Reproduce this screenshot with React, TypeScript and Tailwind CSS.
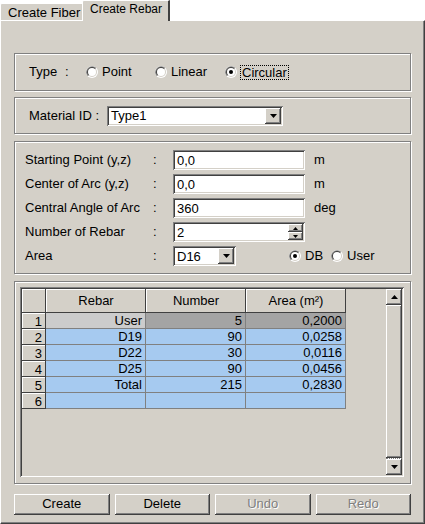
import React from "react";

const raised =
  "bg-[#d4d0c8] shadow-[inset_-1px_-1px_0_#404040,inset_1px_1px_0_#ffffff,inset_-2px_-2px_0_#808080]";
const sunken =
  "bg-white shadow-[inset_1px_1px_0_#808080,inset_-1px_-1px_0_#ffffff,inset_2px_2px_0_#404040,inset_-2px_-2px_0_#d4d0c8]";
const group =
  "border border-[#808080] shadow-[inset_1px_1px_0_#ffffff,1px_1px_0_#ffffff]";

function Radio({ checked }: { checked?: boolean }) {
  return (
    <svg width="12" height="12" viewBox="0 0 12 12" className="shrink-0">
      <circle cx="6" cy="6" r="6" fill="#ffffff" />
      <path d="M1.76 10.24 A6 6 0 0 1 10.24 1.76 Z" fill="#808080" />
      <circle cx="6" cy="6" r="5" fill="#d4d0c8" />
      <path d="M2.46 9.54 A5 5 0 0 1 9.54 2.46 Z" fill="#404040" />
      <circle cx="6" cy="6" r="4" fill="#ffffff" />
      {checked && <circle cx="6" cy="6" r="2" fill="#000000" />}
    </svg>
  );
}

function DownTri() {
  return (
    <svg width="7" height="4" viewBox="0 0 7 4">
      <path d="M0 0 H7 L3.5 4 Z" fill="#000" />
    </svg>
  );
}
function UpTri() {
  return (
    <svg width="7" height="4" viewBox="0 0 7 4">
      <path d="M0 4 H7 L3.5 0 Z" fill="#000" />
    </svg>
  );
}

function DropBtn() {
  return (
    <div className={`w-[16px] h-[16px] flex items-center justify-center ${raised}`}>
      <DownTri />
    </div>
  );
}

function Combo({ w, text }: { w: string; text: string }) {
  return (
    <div className={`${w} h-[20px] flex items-center p-[2px] ${sunken}`}>
      <span className="flex-1 pl-[2px] leading-none">{text}</span>
      <DropBtn />
    </div>
  );
}

function Field({ text, spin }: { text: string; spin?: boolean }) {
  return (
    <div className={`w-[132px] h-[20px] flex items-center p-[2px] ${sunken}`}>
      <span className="flex-1 pl-[2px] leading-none">{text}</span>
      {spin && (
        <div className="flex flex-col w-[15px] h-[16px]">
          <div className={`h-[8px] flex items-center justify-center ${raised}`}>
            <svg width="5" height="3" viewBox="0 0 5 3">
              <path d="M0 3 H5 L2.5 0 Z" fill="#000" />
            </svg>
          </div>
          <div className={`h-[8px] flex items-center justify-center ${raised}`}>
            <svg width="5" height="3" viewBox="0 0 5 3">
              <path d="M0 0 H5 L2.5 3 Z" fill="#000" />
            </svg>
          </div>
        </div>
      )}
    </div>
  );
}

function Row({ label, children }: { label: string; children: React.ReactNode }) {
  return (
    <div className="h-[20px] flex items-center">
      <span className="w-[128px]">{label}</span>
      <span className="w-[20px]">:</span>
      {children}
    </div>
  );
}

const rows = [
  { n: "1", rebar: "User", num: "5", area: "0,2000", first: true },
  { n: "2", rebar: "D19", num: "90", area: "0,0258" },
  { n: "3", rebar: "D22", num: "30", area: "0,0116" },
  { n: "4", rebar: "D25", num: "90", area: "0,0456" },
  { n: "5", rebar: "Total", num: "215", area: "0,2830" },
  { n: "6", rebar: "", num: "", area: "" },
];

const hdr =
  "bg-[#d4d0c8] shadow-[inset_-1px_-1px_0_#404040,inset_1px_1px_0_#ffffff]";

export default function App() {
  return (
    <div className="w-[425px] h-[524px] bg-white text-[13px] text-black font-['Liberation_Sans',Arial,sans-serif] overflow-hidden">
      {/* tabs */}
      <div className="h-[20px] flex items-end relative z-10">
        <div className="w-[82px] h-[17px] bg-[#d4d0c8] border-t border-l border-white rounded-tl-[2px] flex items-center pl-[7px] leading-none whitespace-nowrap">
          Create Fiber
        </div>
        <div className="w-[88px] h-[21px] -mb-[1px] bg-[#d4d0c8] border-t border-l border-white border-r-2 border-r-[#404040] rounded-tl-[2px] flex items-start pt-[2px] pl-[7px] leading-none whitespace-nowrap text-[12px]">
          Create Rebar
        </div>
      </div>
      {/* panel */}
      <div className="h-[504px] bg-[#d4d0c8] border-t border-l border-white border-r border-b border-r-[#404040] border-b-[#404040] shadow-[inset_-1px_-1px_0_#808080] pl-[13px] pr-[13px] flex flex-col">
        {/* Type group */}
        <div className={`mt-[32px] h-[38px] ${group} flex items-center pl-[14px]`}>
          <span className="w-[36px]">Type</span>
          <span className="w-[21px]">:</span>
          <div className="w-[69px] flex items-center gap-[4px]">
            <Radio />
            <span>Point</span>
          </div>
          <div className="w-[70px] flex items-center gap-[4px]">
            <Radio />
            <span>Linear</span>
          </div>
          <div className="flex items-center gap-[3px]">
            <Radio checked />
            <span className="border border-dotted border-black px-[1px] leading-[13px]">Circular</span>
          </div>
        </div>
        {/* Material */}
        <div className={`mt-[6px] h-[37px] ${group} flex items-center pl-[14px]`}>
          <span className="w-[78px]">Material ID :</span>
          <Combo w="w-[176px]" text="Type1" />
        </div>
        {/* parameters */}
        <div className={`mt-[7px] h-[133px] ${group} flex flex-col gap-[4px] pt-[8px] pl-[10px]`}>
          <Row label="Starting Point (y,z)">
            <Field text="0,0" />
            <span className="ml-[9px]">m</span>
          </Row>
          <Row label="Center of Arc (y,z)">
            <Field text="0,0" />
            <span className="ml-[9px]">m</span>
          </Row>
          <Row label="Central Angle of Arc">
            <Field text="360" />
            <span className="ml-[9px]">deg</span>
          </Row>
          <Row label="Number of Rebar">
            <Field text="2" spin />
          </Row>
          <Row label="Area">
            <Combo w="w-[63px]" text="D16" />
            <div className="ml-[53px] flex items-center gap-[4px]">
              <Radio checked />
              <span>DB</span>
            </div>
            <div className="ml-[8px] flex items-center gap-[4px]">
              <Radio />
              <span>User</span>
            </div>
          </Row>
        </div>
        {/* table group */}
        <div className={`mt-[7px] h-[203px] ${group} pt-[5px] pl-[5px]`}>
          <div className="w-[384px] h-[190px] p-[2px] bg-[#d4d0c8] shadow-[inset_1px_1px_0_#808080,inset_-1px_-1px_0_#ffffff,inset_2px_2px_0_#404040,inset_-2px_-2px_0_#d4d0c8] flex">
            <div className="flex-1 flex flex-col">
              <div className="flex h-[24px]">
                <div className={`w-[24px] ${hdr}`} />
                <div className={`w-[100px] ${hdr} flex items-center justify-center`}>Rebar</div>
                <div className={`w-[100px] ${hdr} flex items-center justify-center`}>Number</div>
                <div className={`w-[100px] ${hdr} flex items-center justify-center`}>Area (m²)</div>
              </div>
              {rows.map((r) => (
                <div key={r.n} className="flex h-[16px] leading-none">
                  <div className={`w-[24px] ${hdr} flex items-center justify-end pr-[4px]`}>{r.n}</div>
                  <div
                    className={`w-[100px] border-r border-b border-[#808080] flex items-center justify-end pr-[3px] ${
                      r.first ? "bg-[#cccccc]" : "bg-[#a6caf0]"
                    }`}
                  >
                    {r.rebar}
                  </div>
                  <div
                    className={`w-[100px] border-r border-b border-[#808080] flex items-center justify-end pr-[3px] ${
                      r.first ? "bg-[#a4a4a4]" : "bg-[#a6caf0]"
                    }`}
                  >
                    {r.num}
                  </div>
                  <div
                    className={`w-[100px] border-r border-b border-[#808080] flex items-center justify-end pr-[3px] ${
                      r.first ? "bg-[#a4a4a4]" : "bg-[#a6caf0]"
                    }`}
                  >
                    {r.area}
                  </div>
                </div>
              ))}
            </div>
            {/* scrollbar */}
            <div className="w-[16px] flex flex-col">
              <div className={`h-[16px] flex items-center justify-center ${raised}`}>
                <UpTri />
              </div>
              <div className={`flex-1 ${raised}`} />
              <div className="h-px border-t border-dotted border-[#808080] bg-white" />
              <div className={`h-[16px] flex items-center justify-center ${raised}`}>
                <DownTri />
              </div>
            </div>
          </div>
        </div>
        {/* buttons */}
        <div className="mt-[10px] h-[21px] flex gap-[5px] leading-none">
          <div className={`flex-1 flex items-center justify-center pb-[2px] ${raised}`}>Create</div>
          <div className={`flex-1 flex items-center justify-center pb-[2px] ${raised}`}>Delete</div>
          <div className={`flex-1 flex items-center justify-center pb-[2px] text-[#808080] [text-shadow:1px_1px_0_#ffffff] ${raised}`}>Undo</div>
          <div className={`flex-1 flex items-center justify-center pb-[2px] text-[#808080] [text-shadow:1px_1px_0_#ffffff] ${raised}`}>Redo</div>
        </div>
      </div>
    </div>
  );
}
